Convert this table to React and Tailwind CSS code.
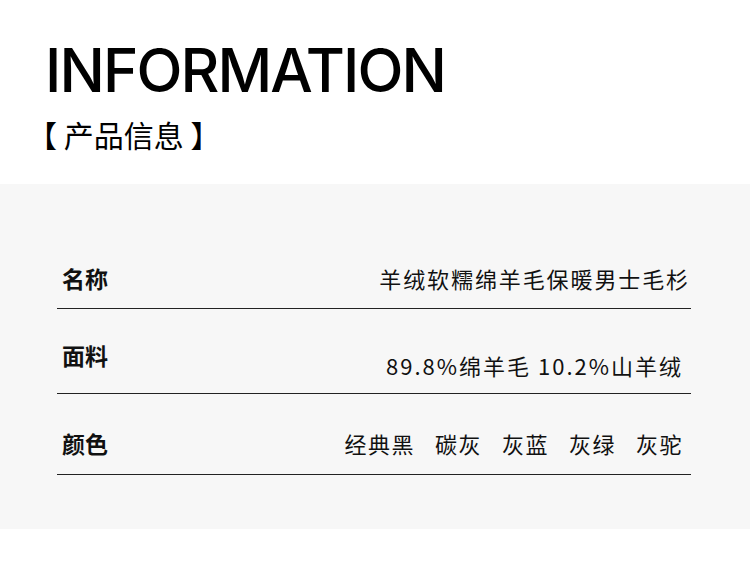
export default function App() {
  const cjk = { fontFamily: '"Noto Sans CJK SC", "Noto Sans", sans-serif' };
  return (
    <div className="w-[750px] h-[567px] bg-white overflow-hidden" style={cjk}>
      <div className="h-[184px] pl-[45px] pt-[36px]">
        <div className="text-[60px] leading-[68px] font-medium text-black tracking-[-1.9px]" style={{ fontFamily: 'Inter, "Liberation Sans", sans-serif' }}>
          INFORMATION
        </div>
        <div className="mt-[10px] text-[30px] leading-[40px] text-black -ml-[18px]">
          【 产品信息 】
        </div>
      </div>
      <div className="h-[345px] bg-[#f7f7f7] pl-[57px] pr-[59px]">
        <div className="h-[125px] flex items-end justify-between border-b border-[#222] text-[#111]">
          <div className="pl-[5px] pb-[15px] text-[23px] leading-[30px] font-bold">名称</div>
          <div className="pr-[1px] pb-[15px] text-[22px] leading-[30px] tracking-[1.9px]">羊绒软糯绵羊毛保暖男士毛杉</div>
        </div>
        <div className="h-[85px] flex items-end justify-between border-b border-[#222] text-[#111]">
          <div className="pl-[5px] pb-[23px] text-[23px] leading-[30px] font-bold">面料</div>
          <div className="pr-[8px] pb-[13px] text-[22px] leading-[30px] tracking-[2px]">89.8%绵羊毛 10.2%山羊绒</div>
        </div>
        <div className="h-[81px] flex items-end justify-between border-b border-[#222] text-[#111]">
          <div className="pl-[5px] pb-[16px] text-[23px] leading-[30px] font-bold">颜色</div>
          <div className="pr-[8px] pb-[16px] text-[22px] leading-[30px] tracking-[1.5px] flex gap-[20px]">
            <span>经典黑</span>
            <span>碳灰</span>
            <span>灰蓝</span>
            <span>灰绿</span>
            <span>灰驼</span>
          </div>
        </div>
      </div>
    </div>
  );
}
